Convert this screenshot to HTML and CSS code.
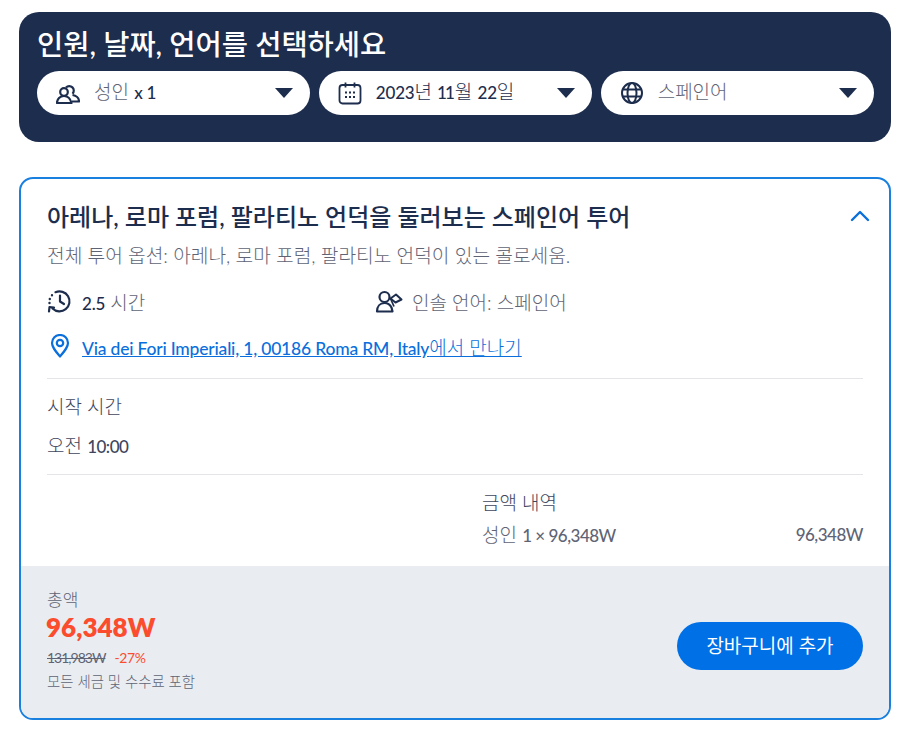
FILE: index.html
```html
<!DOCTYPE html>
<html lang="ko">
<head>
    <meta charset="UTF-8">
    <meta name="viewport" content="width=device-width, initial-scale=1.0">
    <title>투어 옵션</title>
    <link rel="stylesheet" href="styles.css">
</head>
<body>
    <div class="picker">
        <h2 class="picker-title">인원, 날짜, 언어를 선택하세요</h2>
        <div class="picker-row">
            <div class="pill">
                <svg class="pill-icon" viewBox="0 0 24 24" fill="none" stroke="#1d2d4d" stroke-width="2.200" stroke-linejoin="round"><circle cx="8" cy="11" r="3.800"/><path d="M1 22c0-4 3-7 7-7s6.500 3 7.500 7z"/><path d="M10 6.500a4.500 4.500 0 1 1 6.500 6.300"/><path d="M16.500 14c3.500.5 6.500 3 6.500 6.500h-7"/></svg>
                <span class="pill-text">성인 <b class="en">x 1</b></span>
                <span class="caret"></span>
            </div>
            <div class="pill">
                <svg class="pill-icon" viewBox="0 0 24 24" fill="none" stroke="#1d2d4d" stroke-width="1.800"><rect x="1.500" y="4" width="21" height="18.500" rx="3"/><path d="M7.500 1.500v5M16.500 1.500v5"/><path d="M7 11.500h2M11 11.500h2M15 11.500h2M7 16h2M11 16h2M15 16h2" stroke-width="2"/></svg>
                <span class="pill-text dark"><span class="en">2023</span>년 <span class="en ones">11</span>월 <span class="en">22</span>일</span>
                <span class="caret"></span>
            </div>
            <div class="pill">
                <svg class="pill-icon" viewBox="0 0 24 24" fill="none" stroke="#1d2d4d" stroke-width="2"><circle cx="12" cy="12" r="10"/><ellipse cx="12" cy="12" rx="4.500" ry="10"/><path d="M2.500 8.500h19M2.500 15.500h19"/></svg>
                <span class="pill-text">스페인어</span>
                <span class="caret"></span>
            </div>
        </div>
    </div>

    <div class="option">
        <div class="option-body">
            <div class="option-head">
                <h3>아레나, 로마 포럼, 팔라티노 언덕을 둘러보는 스페인어 투어</h3>
                <svg class="chevron" viewBox="0 0 20 12" fill="none" stroke="#0a6fdc" stroke-width="2.400" stroke-linecap="round" stroke-linejoin="round"><path d="M2 10l8-8 8 8"/></svg>
            </div>
            <p class="option-desc">전체 투어 옵션: 아레나, 로마 포럼, 팔라티노 언덕이 있는 콜로세움.</p>
            <div class="facts">
                <div class="fact fact-time">
                    <svg class="fact-icon" viewBox="0 0 24 24" fill="none" stroke="#1d2d4d" stroke-width="2.200" stroke-linecap="round" stroke-linejoin="round"><path d="M8 3.200A10 10 0 1 1 5 19.500"/><path d="M12.500 6.500v6l4 2.500"/><path d="M1.500 22.500l.5-4.500 4.500.7"/><path d="M4.500 6.200v.1M2.300 10v.1M2 14v.1" stroke-width="2.400"/></svg>
                    <span><b class="en">2.5</b> 시간</span>
                </div>
                <div class="fact">
                    <svg class="fact-icon fact-icon-wide" viewBox="0 0 28 24" fill="none" stroke="#1d2d4d" stroke-width="2.200" stroke-linejoin="round"><circle cx="9.500" cy="8" r="5"/><path d="M2 22.500c0-5 3-8.500 7.500-8.500 3 0 5.500 1.500 7 4.500l1 4z"/><path d="M15.500 9.500l5.500-4 5.500 5-6 3z" stroke-width="2"/><path d="M15.500 9.500l3.500 8" stroke-width="1.800"/></svg>
                    <span>인솔 언어: 스페인어</span>
                </div>
            </div>
            <div class="meet">
                <svg class="meet-icon" viewBox="0 0 20 24" fill="none" stroke="#0a6fdc" stroke-width="2.200"><path d="M10 22.500C5 16.500 2 13 2 9a8 8 0 0 1 16 0c0 4-3 7.500-8 13.500z" stroke-linejoin="round"/><circle cx="10" cy="9" r="3.200"/></svg>
                <a href="#"><span class="en link-en">Via dei Fori Imperiali, 1, 00186 Roma RM, Italy</span>에서 만나기</a>
            </div>
            <div class="times">
                <div class="times-label">시작 시간</div>
                <div class="times-value">오전 <b class="en tight">10:00</b></div>
            </div>
            <div class="breakdown">
                <div class="breakdown-title">금액 내역</div>
                <div class="breakdown-row">
                    <span>성인 <b class="en tight">1 × 96,348W</b></span>
                    <b class="en tight">96,348W</b>
                </div>
            </div>
        </div>
        <div class="option-foot">
            <div class="total">
                <div class="total-label">총액</div>
                <div class="total-price">96,348W</div>
                <div class="total-was"><s>131,983W</s><span class="off">-27%</span></div>
                <div class="total-note">모든 세금 및 수수료 포함</div>
            </div>
            <button class="add-btn">장바구니에 추가</button>
        </div>
    </div>
</body>
</html>
```

FILE: styles.css
```css
:root {
    --navy: #1d2d4d;
    --blue: #0a6fdc;
    --gray: #5f6475;
}

* {
    margin: 0;
    padding: 0;
    box-sizing: border-box;
}

body {
    font-family: "Lato", "Noto Sans CJK KR", sans-serif;
    background-color: white;
    color: var(--navy);
    padding: 12px 9px 12px 19px;
}

b {
    font-weight: 500;
}

/* latin text and digits run smaller than the korean next to them */
.en {
    font-size: 17px;
    font-weight: 500;
    letter-spacing: -0.2px;
}

.tight {
    letter-spacing: -0.5px;
}

.ones {
    letter-spacing: -2px;
    margin-right: 2px;
}

.link-en {
    font-size: 17.500px;
}

.picker {
    background-color: var(--navy);
    border-radius: 20px;
    height: 130px;
    padding: 14px 17px 0 18px;
}

.picker-title {
    font-size: 28.500px;
    font-weight: 500;
    line-height: 36px;
    color: white;
    margin-bottom: 9px;
}

.picker-row {
    display: flex;
    gap: 8.500px;
}

.pill {
    flex: 1;
    height: 44px;
    background-color: white;
    border-radius: 22px;
    display: flex;
    align-items: center;
    padding: 0 17px 0 19px;
}

.pill-icon {
    width: 24px;
    height: 24px;
    margin-right: 14px;
}

.pill-text {
    flex: 1;
    font-size: 19px;
    font-weight: 300;
    color: var(--gray);
    margin-top: -5px;
}

.pill-text b, .pill-text.dark {
    color: var(--navy);
}

.caret {
    width: 0;
    height: 0;
    border-left: 9px solid transparent;
    border-right: 9px solid transparent;
    border-top: 10px solid var(--navy);
}

.option {
    margin-top: 35px;
    border: 2px solid #1a80e0;
    border-radius: 14px;
    overflow: hidden;
}

.option-body {
    padding: 18px 26px 0;
    height: 387px;
}

.option-head {
    display: flex;
    justify-content: space-between;
    align-items: center;
    height: 36px;
}

.option-head h3 {
    font-size: 24px;
    font-weight: 500;
}

.chevron {
    width: 20px;
    height: 12px;
    margin: 2px -7px 0 0;
}

.option-desc {
    font-size: 19.200px;
    font-weight: 300;
    line-height: 26px;
    color: var(--gray);
    margin-top: 10px;
}

.facts {
    display: flex;
    margin-top: 19px;
    height: 26px;
    font-size: 19px;
    font-weight: 300;
    color: var(--gray);
}

.fact {
    display: flex;
    align-items: center;
}

.fact-time {
    width: 328px;
}

.fact b {
    color: var(--navy);
}

.fact-icon {
    width: 25px;
    height: 24px;
    margin-right: 10px;
}

.fact-icon-wide {
    width: 28px;
    margin-right: 9px;
}

.meet {
    display: flex;
    align-items: center;
    margin-top: 19px;
    height: 26px;
    padding-bottom: 19px;
    box-sizing: content-box;
    border-bottom: 1px solid #e3e5e8;
    font-size: 19px;
    font-weight: 300;
}

.meet-icon {
    width: 20px;
    height: 24px;
    margin: 0 12px 0 3px;
}

.meet a {
    color: var(--blue);
}

.times {
    font-size: 19px;
    font-weight: 300;
    border-bottom: 1px solid #e3e5e8;
    height: 96px;
    padding-top: 15px;
}

.times-label {
    line-height: 26px;
    color: #3f465c;
}

.times-value {
    line-height: 26px;
    margin-top: 13px;
    color: #3f465c;
}

.breakdown {
    margin-left: 435px;
    padding-top: 15px;
    font-size: 19px;
    font-weight: 300;
}

.breakdown-title {
    line-height: 26px;
    color: #3f465c;
}

.breakdown-row {
    display: flex;
    justify-content: space-between;
    line-height: 26px;
    margin-top: 6px;
    color: var(--gray);
}

.option-foot {
    background-color: #e9edf1;
    height: 152px;
    padding: 23px 26px 0;
    display: flex;
    justify-content: space-between;
    align-items: flex-start;
}

.total-label {
    font-size: 17px;
    font-weight: 300;
    line-height: 21px;
    color: var(--gray);
}

.total-price {
    font-size: 26px;
    font-weight: 800;
    line-height: 34px;
    color: #fb4c2d;
    margin-left: -1px;
}

.total-was {
    font-size: 14px;
    line-height: 24px;
    margin-top: 2px;
    color: var(--gray);
}

.total-was s {
    letter-spacing: -1px;
}

.off {
    color: #fb4c2d;
    margin-left: 9px;
    letter-spacing: -0.4px;
}

.total-note {
    font-size: 14.400px;
    font-weight: 300;
    line-height: 24px;
    color: var(--gray);
}

.add-btn {
    margin-top: 33px;
    width: 186px;
    height: 48px;
    padding-bottom: 4px;
    border: none;
    border-radius: 24px;
    background-color: #0070e6;
    color: white;
    font-family: inherit;
    font-size: 19px;
    cursor: pointer;
}
```
